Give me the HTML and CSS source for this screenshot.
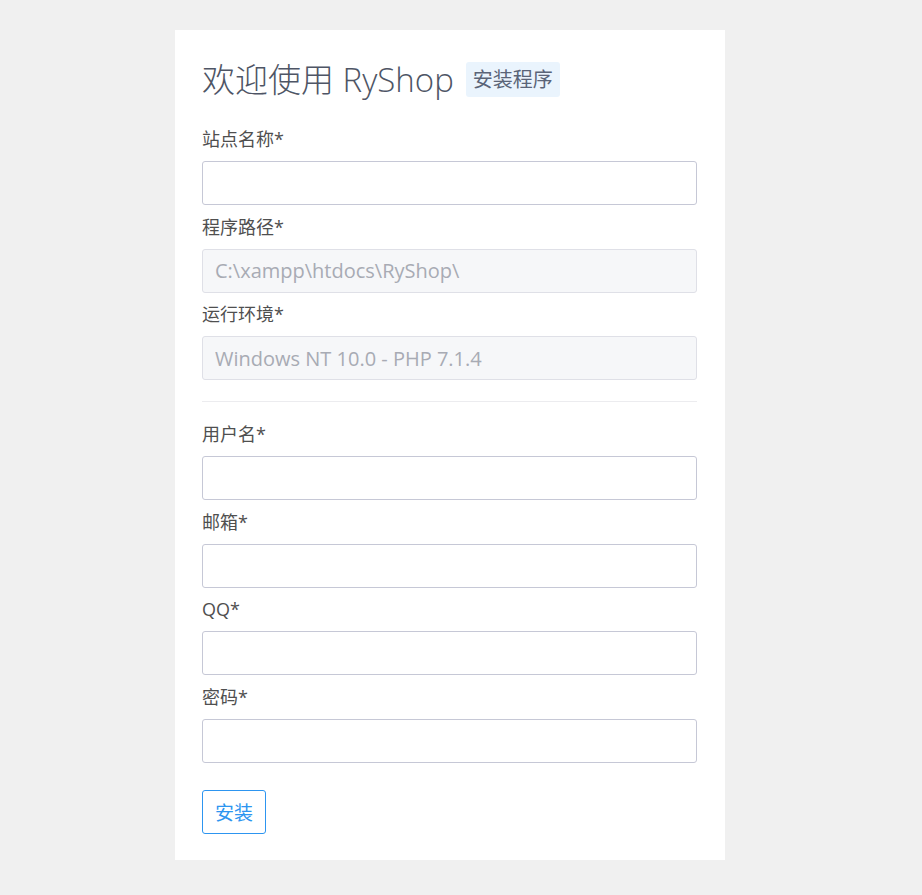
FILE: index.html
```html
<!DOCTYPE html>
<html lang="zh-CN">
<head>
    <meta charset="UTF-8" />
    <meta name="viewport" content="width=device-width, initial-scale=1.0" />
    <title>RyShop 安装程序</title>
    <link rel="stylesheet" href="styles.css">
</head>
<body>
    <div class="install-box">
        <h1 class="title">欢迎使用 RyShop<span class="badge">安装程序</span></h1>

        <form class="install-form">
            <div class="form-group">
                <label for="sitename">站点名称*</label>
                <input type="text" id="sitename" class="form-input">
            </div>
            <div class="form-group">
                <label for="path">程序路径*</label>
                <input type="text" id="path" class="form-input" value="C:\xampp\htdocs\RyShop\" disabled>
            </div>
            <div class="form-group">
                <label for="env">运行环境*</label>
                <input type="text" id="env" class="form-input" value="Windows NT 10.0 - PHP 7.1.4" disabled>
            </div>

            <hr class="divider">

            <div class="form-group">
                <label for="username">用户名*</label>
                <input type="text" id="username" class="form-input">
            </div>
            <div class="form-group">
                <label for="email">邮箱*</label>
                <input type="text" id="email" class="form-input">
            </div>
            <div class="form-group">
                <label for="qq">QQ*</label>
                <input type="text" id="qq" class="form-input">
            </div>
            <div class="form-group">
                <label for="password">密码*</label>
                <input type="password" id="password" class="form-input">
            </div>

            <button type="button" class="install-button">安装</button>
        </form>
    </div>
</body>
</html>
```

FILE: styles.css
```css
:root {
    --page-bg: #f0f0f0;
    --label-text: #4f4f4f;
    --title-text: #4e5565;
    --input-border: #c6c8d6;
    --disabled-bg: #f6f7f9;
    --disabled-border: #dfe0e7;
    --primary-color: #2d95f0;
}

* {
    margin: 0;
    padding: 0;
    box-sizing: border-box;
}

body {
    font-family: "Open Sans", "Noto Sans CJK SC", sans-serif;
    background-color: var(--page-bg);
    color: var(--label-text);
}

.install-box {
    width: 550px;
    margin: 30px 0 35px 175px;
    padding: 27px 28px 26px 27px;
    background-color: white;
}

.title {
    display: flex;
    align-items: center;
    height: 42px;
    margin-bottom: 27px;
    font-size: 33px;
    font-weight: 300;
    color: var(--title-text);
    white-space: pre;
}

.badge {
    display: inline-block;
    margin-left: 12px;
    margin-top: 3px;
    padding: 0 7px;
    height: 35px;
    line-height: 35px;
    font-size: 20px;
    font-weight: 400;
    color: #5a6478;
    background-color: #eaf4fd;
    border-radius: 3px;
}

.form-group {
    margin-bottom: 8.5px;
}

.form-group label {
    display: block;
    font-size: 18px;
    line-height: 26px;
    margin-bottom: 9px;
}

.form-input {
    display: block;
    width: 100%;
    height: 44px;
    padding: 0 12px;
    font-family: inherit;
    font-size: 20px;
    color: #333;
    background-color: white;
    border: 1px solid var(--input-border);
    border-radius: 3px;
    outline: none;
}

.form-input:disabled {
    background-color: var(--disabled-bg);
    border-color: var(--disabled-border);
    color: #a8abb4;
}

.divider {
    border: none;
    border-top: 1px solid #ececef;
    margin: 21px 0 19px;
}

.install-button {
    display: block;
    margin-top: 27.5px;
    height: 44px;
    padding: 0 12px;
    font-family: inherit;
    font-size: 19px;
    color: var(--primary-color);
    background-color: white;
    border: 1px solid var(--primary-color);
    border-radius: 3px;
    cursor: pointer;
}
```
